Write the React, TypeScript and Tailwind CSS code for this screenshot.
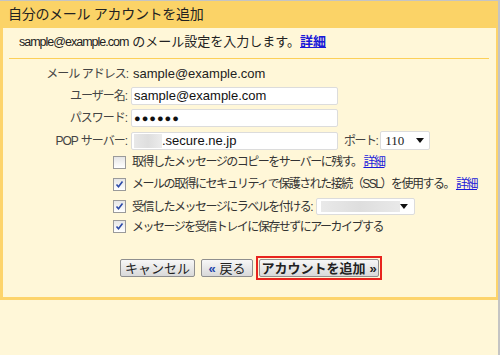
import React from "react"

const font = { fontFamily: '"Liberation Sans", "Noto Sans CJK JP", sans-serif' }

function Checkbox({ checked }: { checked?: boolean }) {
  return (
    <div className="w-[13px] h-[13px] border border-[#9a9a9a] bg-gradient-to-b from-[#e6e6e6] to-[#ffffff] flex items-center justify-center shrink-0">
      {checked && (
        <svg width="9" height="9" viewBox="0 0 9 9">
          <path d="M1.5 4.5 L3.5 6.8 L7.5 1.5" stroke="#2b4aa8" strokeWidth="1.6" fill="none" />
        </svg>
      )}
    </div>
  )
}

function Input({ children }: { children?: React.ReactNode }) {
  return (
    <div className="w-[207px] h-[18px] bg-white border border-[#dcdcdc] rounded-[2px] flex items-center px-[2px] text-[13px] text-[#111]">
      {children}
    </div>
  )
}

function Button({ children, bold }: { children: React.ReactNode; bold?: boolean }) {
  return (
    <button
      className={`h-[18px] border border-[#8f8f8f] rounded-[2px] bg-gradient-to-b from-[#f7f7f7] to-[#d9d9d9] text-[13px] text-[#222] leading-none flex items-center justify-center ${
        bold ? "font-bold" : ""
      }`}
    >
      {children}
    </button>
  )
}

export default function App() {
  return (
    <div
      className="w-[500px] h-[355px] bg-[#fff7d8] border-t border-r-[2px] border-[#c4c4c4] overflow-hidden"
      style={font}
    >
      <div className="w-[498px] h-full flex flex-col">
        {/* Header */}
        <div className="h-[27px] bg-[#fbd367] flex items-center pl-[8px] text-[14px] tracking-[-0.3px] text-[#222]">
          自分のメール アカウントを追加
        </div>

        {/* Panel */}
        <div className="h-[272px] border-l-[3px] border-r-[2px] border-b-[3px] border-[#fdd46b] flex flex-col">
          <div className="h-[30px] pb-[2px] pl-[16px] text-[13px] text-[#222] flex items-center">
            <span className="text-[12.5px] tracking-[-1px]">sample@example.com</span>
            <span className="ml-[4px]">のメール設定を入力します。</span>
            <span className="font-bold text-[#1a1ad8] underline">詳細</span>
          </div>
          <div className="ml-[6px] mr-[7px] h-px bg-[#fcd058]" />

          {/* Form */}
          <div className="flex flex-col gap-[4px] mt-[6px] text-[13px] text-[#222]">
            <div className="flex items-center h-[18px]">
              <div className="w-[125px] text-right text-[#444] text-[12px] tracking-[-1px]">メール アドレス:</div>
              <div className="ml-[5px]">sample@example.com</div>
            </div>
            <div className="flex items-center h-[18px]">
              <div className="w-[125px] text-right text-[#444] text-[12px] tracking-[-1px] pr-[1px]">ユーザー名:</div>
              <div className="ml-[3px]">
                <Input>sample@example.com</Input>
              </div>
            </div>
            <div className="flex items-center h-[18px]">
              <div className="w-[125px] text-right text-[#444] text-[12px] tracking-[-1px] pr-[1px]">パスワード:</div>
              <div className="ml-[3px]">
                <Input>
                  <span className="tracking-[1px] text-[11px]">●●●●●●</span>
                </Input>
              </div>
            </div>
            <div className="flex items-center h-[19px]">
              <div className="w-[125px] text-right text-[#444] text-[12px] tracking-[-1px] pr-[1px]">
                POP<span className="ml-[3px]">サーバー:</span>
              </div>
              <div className="ml-[3px]">
                <Input>
                  <span className="w-[28px] h-[14px] bg-gradient-to-r from-[#e8e8e8] via-[#dedede] to-[#ececec] inline-block" />
                  <span>.secure.ne.jp</span>
                </Input>
              </div>
              <div className="ml-[6px] text-[#444] text-[12px] tracking-[-1.5px]">ポート:</div>
              <div className="ml-[3px] w-[50px] h-[19px] bg-white border border-[#dcdcdc] rounded-[2px] flex items-center justify-between pl-[4px] pr-[5px]">
                <span style={{ fontFamily: '"Liberation Serif", serif' }} className="text-[13px]">110</span>
                <svg width="8" height="5" viewBox="0 0 8 5">
                  <path d="M0 0 H8 L4 5 Z" fill="#111" />
                </svg>
              </div>
            </div>
          </div>

          {/* Checkboxes */}
          <div className="flex flex-col mt-[1px] pl-[110px] text-[12px] tracking-[-1.5px] text-[#333]">
            <div className="flex items-center h-[22px] gap-[6px]">
              <Checkbox />
              <span className="whitespace-nowrap">
                取得したメッセージのコピーをサーバーに残す。
                <span className="text-[#1a1ad8] underline ml-[2px]">詳細</span>
              </span>
            </div>
            <div className="flex items-center h-[22px] gap-[6px]">
              <Checkbox checked />
              <span className="whitespace-nowrap">
                メールの取得にセキュリティで保護された接続（SSL）を使用する。
                <span className="text-[#1a1ad8] underline ml-[2px]">詳細</span>
              </span>
            </div>
            <div className="flex items-center h-[23px] gap-[6px]">
              <Checkbox checked />
              <span className="whitespace-nowrap">受信したメッセージにラベルを付ける:</span>
              <div className="ml-[-2px] w-[99px] h-[17px] bg-white border border-[#dcdcdc] rounded-[2px] flex items-center justify-between pl-[4px] pr-[6px]">
                <span className="w-[80px] h-[11px] bg-gradient-to-r from-[#e9e9e9] via-[#dedede] to-[#e9e9e9]" />
                <svg width="8" height="5" viewBox="0 0 8 5">
                  <path d="M0 0 H8 L4 5 Z" fill="#111" />
                </svg>
              </div>
            </div>
            <div className="flex items-center h-[17px] gap-[6px]">
              <Checkbox checked />
              <span className="whitespace-nowrap">メッセージを受信トレイに保存せずにアーカイブする</span>
            </div>
          </div>

          {/* Buttons */}
          <div className="flex items-center mt-[21px] pl-[117px] gap-[6px]">
            <Button>
              <span className="w-[73px]">キャンセル</span>
            </Button>
            <Button>
              <span className="w-[50px] flex items-center justify-center gap-[4px]">
                <span className="text-[#2244aa] font-bold">«</span>
                <span>戻る</span>
              </span>
            </Button>
            <div className="border-[2px] border-[#e8241e] p-[1px] ml-[-3px]">
              <Button bold>
                <span className="w-[118px] flex items-center justify-center gap-[4px]">
                  <span>アカウントを追加</span>
                  <span className="text-[#222]">»</span>
                </span>
              </Button>
            </div>
          </div>
        </div>
      </div>
    </div>
  )
}
